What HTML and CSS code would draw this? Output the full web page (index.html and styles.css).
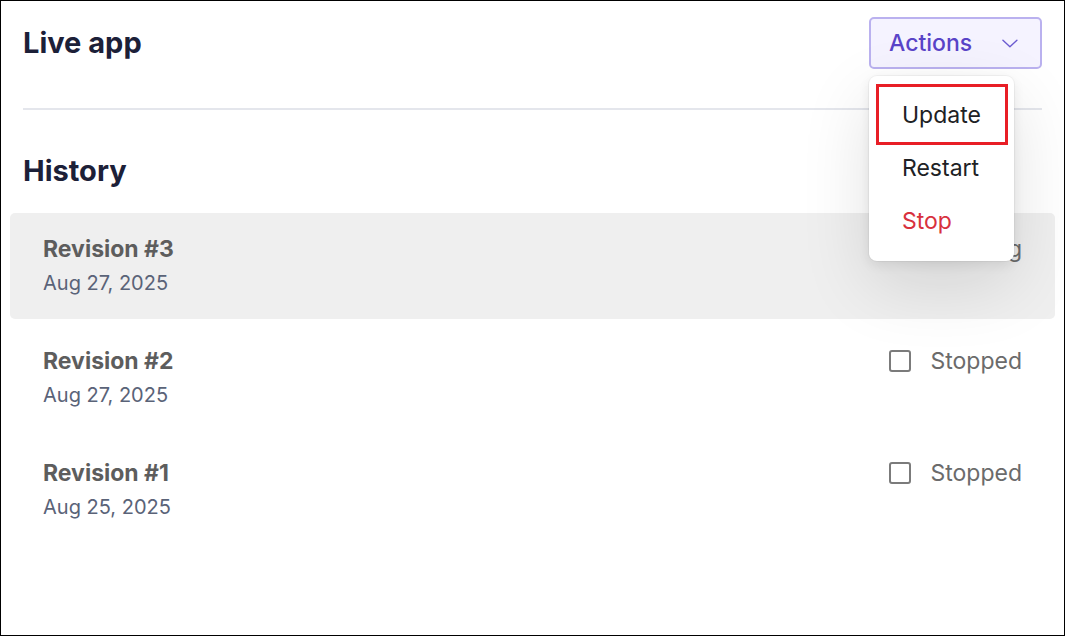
FILE: index.html
```html
<!DOCTYPE html>
<html lang="en">
<head>
<meta charset="utf-8">
<title>Live app</title>
<link rel="stylesheet" href="styles.css">
</head>
<body>
<div class="frame">
  <header class="header">
    <h1 class="title">Live app</h1>
    <div class="actions">
      <button class="actions-btn" type="button">
        <span>Actions</span>
        <svg class="chevron" width="17" height="9" viewBox="0 0 17 9" fill="none"><path d="M1 1l7.5 7 7.5-7" stroke="#6b5bd0" stroke-width="1.5" stroke-linecap="round" stroke-linejoin="round"/></svg>
      </button>
      <ul class="menu">
        <li class="menu-item is-annotated">Update</li>
        <li class="menu-item">Restart</li>
        <li class="menu-item danger">Stop</li>
      </ul>
    </div>
  </header>
  <hr class="divider">
  <h2 class="section-title">History</h2>
  <div class="rows">
    <div class="row active">
      <div class="row-main">
        <div class="rev">Revision #3</div>
        <div class="date">Aug 27, 2025</div>
      </div>
      <div class="status">
        <svg class="icon-run" width="22" height="22" viewBox="0 0 22 22"><circle cx="11" cy="11" r="9" fill="none" stroke="#2fa44f" stroke-width="2"/><circle cx="11" cy="11" r="4" fill="#2fa44f"/></svg>
        <span>Running</span>
      </div>
    </div>
    <div class="row">
      <div class="row-main">
        <div class="rev">Revision #2</div>
        <div class="date">Aug 27, 2025</div>
      </div>
      <div class="status">
        <span class="box"></span>
        <span>Stopped</span>
      </div>
    </div>
    <div class="row">
      <div class="row-main">
        <div class="rev">Revision #1</div>
        <div class="date">Aug 25, 2025</div>
      </div>
      <div class="status">
        <span class="box"></span>
        <span>Stopped</span>
      </div>
    </div>
  </div>
</div>
</body>
</html>
```

FILE: styles.css
```css
html, body {
  margin: 0;
  padding: 0;
  background: #fff;
}
body {
  font-family: Inter, "Noto Sans", "Liberation Sans", sans-serif;
}
.frame {
  width: 1065px;
  height: 636px;
  box-sizing: border-box;
  border: 1px solid #000;
  padding: 16px 22px 0;
  background: #fff;
}
.header {
  display: flex;
  justify-content: space-between;
  align-items: center;
  height: 52px;
}
.title {
  margin: 0;
  font-size: 29px;
  line-height: 36px;
  font-weight: 700;
  color: #1c2038;
}
.actions {
  position: relative;
  height: 52px;
}
.actions-btn {
  height: 52px;
  box-sizing: border-box;
  display: flex;
  align-items: center;
  gap: 30px;
  padding: 0 22px 0 18px;
  background: #f5f3ff;
  border: 2px solid #bab1ef;
  border-radius: 5px;
  font-family: inherit;
  font-size: 23px;
  font-weight: 500;
  color: #5a44c8;
  width: 173px;
}
.chevron {
  display: block;
}
.menu {
  position: absolute;
  top: 59px;
  left: 0;
  width: 145px;
  margin: 0;
  padding: 13px 0 13px;
  list-style: none;
  background: #fff;
  border-radius: 8px;
  box-shadow: 0 0 0 1px rgba(0,0,0,0.04), 0 4px 12px rgba(0,0,0,0.08), 0 24px 70px rgba(0,0,0,0.12);
  z-index: 5;
}
.menu-item {
  position: relative;
  height: 53px;
  line-height: 53px;
  padding-left: 33px;
  font-size: 23px;
  color: #202124;
}
.menu-item.danger {
  color: #d8313d;
}
.is-annotated::after {
  content: "";
  position: absolute;
  top: -5px;
  bottom: -3px;
  left: 7px;
  right: 6px;
  border: 3px solid #e81e26;
}
.divider {
  margin: 39px 0 0;
  border: 0;
  height: 2px;
  background: #e4e6ec;
}
.section-title {
  margin: 43px 0 0;
  font-size: 29px;
  line-height: 36px;
  font-weight: 700;
  color: #1c2038;
}
.rows {
  margin: 24px -13px 0;
  display: flex;
  flex-direction: column;
  gap: 6px;
}
.row {
  display: flex;
  justify-content: space-between;
  align-items: flex-start;
  padding: 22px 33px 23px;
  border-radius: 5px;
}
.row.active {
  background: #efefef;
}
.rev {
  font-size: 23px;
  line-height: 28px;
  font-weight: 700;
  color: #5d5d5d;
}
.date {
  margin-top: 7px;
  font-size: 20px;
  line-height: 26px;
  color: #5a6378;
}
.status {
  display: flex;
  align-items: center;
  gap: 19px;
  font-size: 23px;
  line-height: 28px;
  color: #6b6b6b;
}
.box {
  width: 22px;
  height: 22px;
  box-sizing: border-box;
  border: 2px solid #7b7b7b;
  border-radius: 3px;
}
.icon-run {
  display: block;
}
```
